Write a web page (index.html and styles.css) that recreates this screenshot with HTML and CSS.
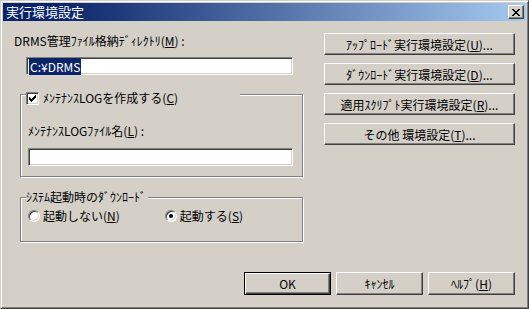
FILE: index.html
```html
<!DOCTYPE html>
<html lang="ja">
<head>
  <meta charset="UTF-8" />
  <title>実行環境設定</title>
  <link rel="stylesheet" href="styles.css">
</head>
<body>
  <div class="window">
    <!-- Title bar -->
    <div class="titlebar">
      <span class="title">実行環境設定</span>
      <button class="close-button" title="閉じる">
        <svg width="8" height="7" viewBox="0 0 8 7">
          <path d="M0 0h2v1h-2zM6 0h2v1h-2zM1 1h2v1h-2zM5 1h2v1h-2zM2 2h4v1h-4zM3 3h2v1h-2zM2 4h4v1h-4zM1 5h2v1h-2zM5 5h2v1h-2zM0 6h2v1h-2zM6 6h2v1h-2z" fill="#000"/>
        </svg>
      </button>
    </div>

    <div class="dialog-body">
      <div class="main">
        <!-- Left column -->
        <div class="left-column">
          <label class="field-label">DRMS管理ﾌｧｲﾙ格納ﾃﾞｨﾚｸﾄﾘ(<u>M</u>) :</label>
          <div class="textbox path-box"><span class="selected">C:¥DRMS</span></div>

          <div class="group log-group">
            <div class="legend check-legend">
              <span class="checkbox">
                <svg width="7" height="7" viewBox="0 0 7 7">
                  <path d="M6 0v1h-1v1h-1v1h-1v1h-1v-1h-1v-1h-1v3h1v1h1v1h1v-1h1v-1h1v-1h1v-1h1v-3z" fill="#000"/>
                </svg>
              </span>
              <span>ﾒﾝﾃﾅﾝｽLOGを作成する(<u>C</u>)</span>
            </div>
            <label class="field-label inner-label">ﾒﾝﾃﾅﾝｽLOGﾌｧｲﾙ名(<u>L</u>) :</label>
            <div class="textbox log-box"></div>
          </div>

          <div class="group startup-group">
            <div class="legend">ｼｽﾃﾑ起動時のﾀﾞｳﾝﾛｰﾄﾞ</div>
            <div class="radio-row">
              <span class="radio-option">
                <span class="radio"></span>
                <span>起動しない(<u>N</u>)</span>
              </span>
              <span class="radio-option option-on">
                <span class="radio checked"></span>
                <span>起動する(<u>S</u>)</span>
              </span>
            </div>
          </div>
        </div>

        <!-- Right column -->
        <div class="right-column">
          <button class="btn side-btn">ｱｯﾌﾟﾛｰﾄﾞ実行環境設定(<u>U</u>)...</button>
          <button class="btn side-btn">ﾀﾞｳﾝﾛｰﾄﾞ実行環境設定(<u>D</u>)...</button>
          <button class="btn side-btn">適用ｽｸﾘﾌﾟﾄ実行環境設定(<u>R</u>)...</button>
          <button class="btn side-btn">その他 環境設定(<u>T</u>)...</button>
        </div>
      </div>

      <!-- Footer buttons -->
      <div class="footer">
        <button class="btn footer-btn default-btn">OK</button>
        <button class="btn footer-btn">ｷｬﾝｾﾙ</button>
        <button class="btn footer-btn">ﾍﾙﾌﾟ(<u>H</u>)</button>
      </div>
    </div>
  </div>
</body>
</html>
```

FILE: styles.css
```css
/* Reset */
* {
  margin: 0;
  padding: 0;
  box-sizing: border-box;
}

body {
  font-family: "Noto Sans CJK JP", "Noto Sans", sans-serif;
  font-size: 12px;
  color: #000;
  background: #d4d0c8;
}

u {
  text-decoration: underline;
  text-underline-offset: 1px;
}

/* Window frame */
.window {
  width: 529px;
  height: 309px;
  display: flex;
  flex-direction: column;
  background: #d4d0c8;
  border: 1px solid;
  border-color: #d4d0c8 #404040 #404040 #d4d0c8;
  box-shadow: inset 1px 1px 0 #fff, inset -1px -1px 0 #808080;
  padding: 2px;
}

/* Title bar */
.titlebar {
  height: 18px;
  display: flex;
  align-items: center;
  justify-content: space-between;
  padding: 0 2px 0 3px;
  background: linear-gradient(to right, #0a246a 10%, #a6caf0);
}

.title {
  color: #fff;
  font-size: 13px;
  line-height: 18px;
}

.close-button {
  width: 16px;
  height: 14px;
  display: flex;
  align-items: center;
  justify-content: center;
  background: #d4d0c8;
  border: 1px solid;
  border-color: #fff #404040 #404040 #fff;
  box-shadow: inset -1px -1px 0 #808080;
}

/* Dialog content */
.dialog-body {
  flex: 1;
  display: flex;
  flex-direction: column;
  padding: 13px 11px 11px 11px;
}

.main {
  display: flex;
  justify-content: space-between;
}

.left-column {
  width: 290px;
  display: flex;
  flex-direction: column;
}

.field-label {
  display: block;
  height: 14px;
  line-height: 14px;
  white-space: nowrap;
}

/* Sunken text box */
.textbox {
  height: 18px;
  background: #fff;
  border: 1px solid;
  border-color: #808080 #fff #fff #808080;
  box-shadow: inset 1px 1px 0 #404040, inset -1px -1px 0 #d4d0c8;
  padding: 2px 2px;
  line-height: 13px;
}

.path-box {
  width: 267px;
  margin: 9px 0 0 12px;
}

.selected {
  background: #0a246a;
  color: #fff;
  padding: 0 1px;
}

/* Etched group box */
.group {
  position: relative;
  width: 283px;
  margin-left: 6px;
  border: 1px solid #808080;
  box-shadow: inset 1px 1px 0 #fff, 1px 1px 0 #fff;
}

.legend {
  position: absolute;
  top: -8px;
  left: 5px;
  height: 14px;
  line-height: 14px;
  padding-right: 2px;
  background: #d4d0c8;
  white-space: nowrap;
}

.log-group {
  margin-top: 19px;
  height: 83px;
  padding: 29px 9px 0 7px;
}

.check-legend {
  top: -4px;
  width: 214px;
  display: flex;
  align-items: center;
  gap: 4px;
}

.checkbox {
  width: 13px;
  height: 13px;
  display: flex;
  align-items: center;
  justify-content: center;
  background: #fff;
  border: 1px solid;
  border-color: #808080 #fff #fff #808080;
  box-shadow: inset 1px 1px 0 #404040, inset -1px -1px 0 #d4d0c8;
}

.log-box {
  width: 265px;
  margin-top: 10px;
}

.startup-group {
  margin-top: 20px;
  height: 45px;
  padding: 11px 0 0 7px;
}

.radio-row {
  display: flex;
}

.radio-option {
  display: flex;
  align-items: center;
  gap: 3px;
  height: 14px;
  line-height: 14px;
}

.option-on {
  margin-left: 45px;
}

/* Round radio button */
.radio {
  width: 12px;
  height: 12px;
  border-radius: 50%;
  background: #fff;
  border: 1px solid;
  border-color: #808080 #fff #fff #808080;
  box-shadow: inset 1px 1px 0 #404040, inset -1px -1px 0 #d4d0c8;
  display: flex;
  align-items: center;
  justify-content: center;
}

.radio.checked::after {
  content: "";
  width: 4px;
  height: 4px;
  border-radius: 50%;
  background: #000;
}

/* Raised buttons */
.btn {
  font-family: inherit;
  font-size: 12px;
  color: #000;
  background: #d4d0c8;
  border: 1px solid;
  border-color: #fff #404040 #404040 #fff;
  box-shadow: inset -1px -1px 0 #808080;
  white-space: nowrap;
}

.right-column {
  display: flex;
  flex-direction: column;
  gap: 8px;
  margin-top: -1px;
}

.side-btn {
  width: 191px;
  height: 22px;
}

.footer {
  margin-top: auto;
  display: flex;
  justify-content: flex-end;
  gap: 5px;
}

.footer-btn {
  width: 87px;
  height: 23px;
}

.default-btn {
  border: 1px solid #000;
  box-shadow: inset 1px 1px 0 #fff, inset -1px -1px 0 #404040, inset -2px -2px 0 #808080;
}
```
